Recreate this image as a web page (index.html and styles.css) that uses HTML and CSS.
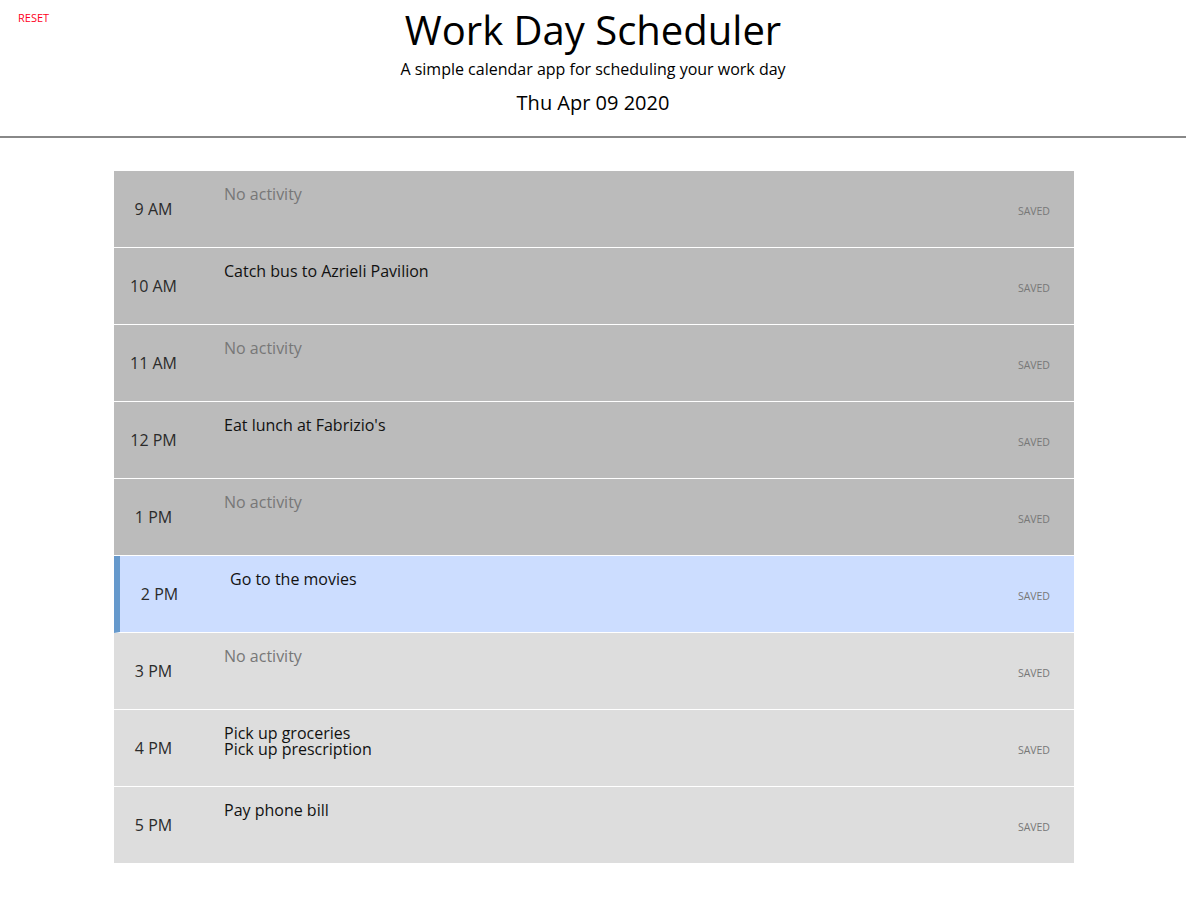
FILE: index.html
```
<!DOCTYPE html>
<html lang="en">
<head>
<meta charset="utf-8">
<title>Work Day Scheduler</title>
<link rel="stylesheet" href="styles.css">
</head>
<body>
<header class="jumbotron">
  <a class="reset" href="#">RESET</a>
  <h1 class="title">Work Day Scheduler</h1>
  <p class="lead">A simple calendar app for scheduling your work day</p>
  <p class="date">Thu Apr 09 2020</p>
</header>
<main class="container">
  <div class="row past"><div class="hour">9 AM</div><div class="activity empty">No activity</div><div class="saved">SAVED</div></div>
  <div class="row past"><div class="hour">10 AM</div><div class="activity">Catch bus to Azrieli Pavilion</div><div class="saved">SAVED</div></div>
  <div class="row past"><div class="hour">11 AM</div><div class="activity empty">No activity</div><div class="saved">SAVED</div></div>
  <div class="row past"><div class="hour">12 PM</div><div class="activity">Eat lunch at Fabrizio's</div><div class="saved">SAVED</div></div>
  <div class="row past"><div class="hour">1 PM</div><div class="activity empty">No activity</div><div class="saved">SAVED</div></div>
  <div class="row present"><div class="hour">2 PM</div><div class="activity">Go to the movies</div><div class="saved">SAVED</div></div>
  <div class="row future"><div class="hour">3 PM</div><div class="activity empty">No activity</div><div class="saved">SAVED</div></div>
  <div class="row future"><div class="hour">4 PM</div><div class="activity">Pick up groceries<br>Pick up prescription</div><div class="saved">SAVED</div></div>
  <div class="row future"><div class="hour">5 PM</div><div class="activity">Pay phone bill</div><div class="saved">SAVED</div></div>
</main>
</body>
</html>
```
FILE: styles.css
```
* { box-sizing: border-box; }
body {
  margin: 0;
  font-family: "Open Sans", "Liberation Sans", sans-serif;
  color: #000;
  background: #fff;
}
.jumbotron {
  position: relative;
  text-align: center;
  padding: 6px 0 19px;
  border-bottom: 2px solid #888;
}
.reset {
  position: absolute;
  left: 18px;
  top: 11px;
  font-size: 11px;
  line-height: 14px;
  color: #ff0022;
  text-decoration: none;
}
.title {
  margin: 0;
  font-size: 40px;
  line-height: 48px;
  font-weight: 400;
}
.lead {
  margin: 4px 0 0;
  font-size: 16px;
  line-height: 22px;
}
.date {
  margin: 9px 0 0;
  font-size: 20px;
  line-height: 28px;
}
.container {
  width: 960px;
  margin: 33px 0 40px calc(50% - 479px);
}
.row {
  display: flex;
  height: 77px;
  border-bottom: 1px solid #fff;
}
.row:last-child { height: 76px; border-bottom: 0; }
.past { background: #bbbbbb; }
.present { background: #ccddff; border-left: 6px solid #6699cc; }
.future { background: #dddddd; }
.hour {
  width: 79px;
  flex: none;
  display: flex;
  align-items: center;
  justify-content: center;
  font-size: 16px;
  color: #2b2b2b;
}
.activity {
  flex: 1;
  padding: 15px 0 0 31px;
  font-size: 16px;
  line-height: 16px;
  color: #111;
}
.activity.empty { color: #777; }
.saved {
  flex: none;
  align-self: center;
  margin-top: 4px;
  padding-right: 24px;
  font-size: 10.5px;
  color: #777;
}
```
